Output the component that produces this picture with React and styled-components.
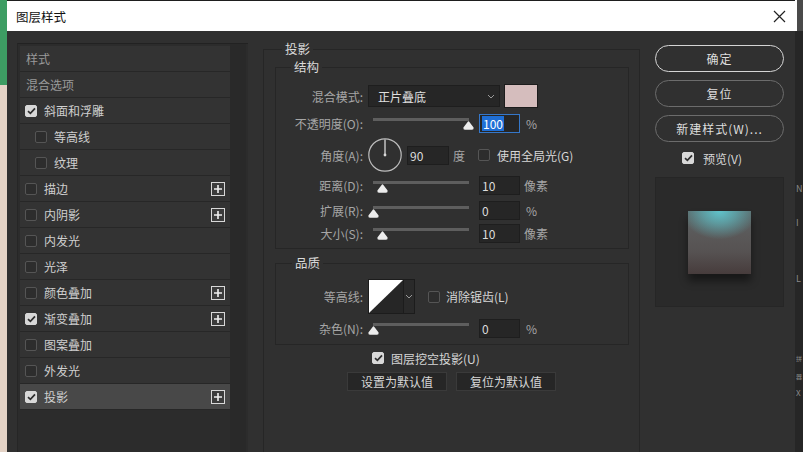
import React from "react";
import styled, { createGlobalStyle } from "styled-components";

const Global = createGlobalStyle`
  html, body { margin: 0; padding: 0; background: #2a2a2a; }
  body { font-family: "Noto Sans CJK SC", "Noto Sans", sans-serif; font-size: 12px; }
  * { box-sizing: border-box; }
`;

const Screen = styled.div`
  display: flex;
  width: 803px;
  height: 452px;
  overflow: hidden;
`;

const Backdrop = styled.div`
  width: 7px;
  flex-shrink: 0;
  display: flex;
  flex-direction: column;
`;

const BackdropPart = styled.div`
  height: ${(p) => (p.$h ? `${p.$h}px` : "auto")};
  flex: ${(p) => (p.$h ? "none" : 1)};
  background: ${(p) => p.$c};
`;

const Dialog = styled.div`
  width: 788px;
  flex-shrink: 0;
  display: flex;
  flex-direction: column;
  background: #303030;
`;

const TitleBar = styled.div`
  height: 31px;
  flex-shrink: 0;
  background: #ffffff;
  border-top: 1px solid #1e1e1e;
  display: flex;
  align-items: center;
  justify-content: space-between;
  padding: 0 9px 0 9px;
  color: #111;
  font-size: 12.5px;
`;

const Body = styled.div`
  flex: 1;
  display: flex;
  align-items: flex-start;
  overflow: hidden;
`;

/* ---------- left list ---------- */
const LeftPanel = styled.div`
  margin: 12px 0 0 10px;
  width: 231px;
  height: 420px;
  display: flex;
  background: #2c2c2c;
  border-top: 1px solid #222;
  border-left: 1px solid #262626;
`;

const List = styled.div`
  width: 212px;
  padding: 2px 0 0 2px;
  display: flex;
  flex-direction: column;
`;

const Scrollbar = styled.div`
  width: 16px;
  background: #292929;
`;

const ListRow = styled.div`
  height: 26px;
  flex-shrink: 0;
  display: flex;
  align-items: center;
  padding-left: ${(p) => p.$pad}px;
  padding-right: 5px;
  background: ${(p) => (p.$active ? "#484848" : "#333333")};
  border-bottom: 1px solid #272727;
  color: ${(p) => (p.$dim ? "#9a9a9a" : "#cfcfcf")};
  font-size: 12px;
`;

const ItemText = styled.span`
  margin-left: ${(p) => p.$ml || 0}px;
`;

const PlusBox = styled.span`
  margin-left: auto;
  width: 14px;
  height: 14px;
  border: 1px solid #d8d8d8;
  background: #3c3c3c;
  display: flex;
  align-items: center;
  justify-content: center;
`;

const Box = styled.span`
  width: 12px;
  height: 12px;
  flex-shrink: 0;
  border-radius: 2px;
  border: 1px solid ${(p) => (p.$on ? "#d8d8d8" : "#555555")};
  background: ${(p) => (p.$on ? "#d8d8d8" : "#2d2d2d")};
  display: flex;
  align-items: center;
  justify-content: center;
`;

const Check = ({ on }) => (
  <Box $on={on}>
    {on && (
      <svg width="9" height="8" viewBox="0 0 9 8">
        <path d="M1 4.2 L3.4 6.4 L8 1.4" fill="none" stroke="#2e2e2e" strokeWidth="1.7" />
      </svg>
    )}
  </Box>
);

const Plus = () => (
  <PlusBox>
    <svg width="10" height="10" viewBox="0 0 10 10">
      <path d="M5 1 V9 M1 5 H9" stroke="#f0f0f0" strokeWidth="1.6" />
    </svg>
  </PlusBox>
);

/* ---------- middle ---------- */
const Middle = styled.div`
  margin: 18px 0 0 15px;
  width: 377px;
  height: 420px;
  flex-shrink: 0;
  position: relative;
  border: 1px solid #262626;
  display: flex;
  flex-direction: column;
`;

const Group = styled.div`
  position: relative;
  margin: ${(p) => p.$mt}px 0 0 11px;
  width: 354px;
  border: 1px solid #262626;
  padding: ${(p) => p.$pt}px 0 ${(p) => p.$pb}px 0;
  display: flex;
  flex-direction: column;
`;

const GroupTitle = styled.span`
  position: absolute;
  top: -10px;
  left: ${(p) => p.$left}px;
  padding: 0 3px;
  background: #303030;
  color: #dadada;
  font-size: 12.5px;
  line-height: 18px;
`;

const Row = styled.div`
  height: ${(p) => p.$h}px;
  flex-shrink: 0;
  display: flex;
  align-items: center;
`;

const Label = styled.span`
  width: 87px;
  flex-shrink: 0;
  text-align: right;
  color: #a6a6a6;
  margin-right: ${(p) => p.$mr}px;
  white-space: nowrap;
`;

const Select = styled.div`
  width: 132px;
  height: 22px;
  background: #262626;
  border: 1px solid #1e1e1e;
  display: flex;
  align-items: center;
  justify-content: space-between;
  padding: 0 4px 0 9px;
  color: #e0e0e0;
`;

const Swatch = styled.div`
  margin-left: 4px;
  width: 34px;
  height: 24px;
  background: #d5bdbd;
  border: 1px solid #1c1c1c;
`;

const SliderWrap = styled.div`
  position: relative;
  width: 96px;
  height: 16px;
  flex-shrink: 0;
`;

const Track = styled.div`
  position: absolute;
  left: 0;
  right: 0;
  top: 3px;
  height: 3px;
  background: #5e5e5e;
`;

const Thumb = styled.svg`
  position: absolute;
  top: 6px;
`;

const Slider = ({ pos }) => (
  <SliderWrap>
    <Track />
    <Thumb width="11" height="9" viewBox="0 0 11 9" style={{ left: pos - 5.5 }}>
      <path d="M5.5 0.3 Q6 0.3 6.4 0.9 L10.6 6.6 Q11 8.8 9 8.8 L2 8.8 Q0 8.8 0.4 6.6 L4.6 0.9 Q5 0.3 5.5 0.3 Z" fill="#ececec" />
    </Thumb>
  </SliderWrap>
);

const Field = styled.div`
  margin-left: ${(p) => p.$ml}px;
  width: ${(p) => p.$w}px;
  height: 19px;
  flex-shrink: 0;
  background: #262626;
  border: 1px solid ${(p) => (p.$focus ? "#3577c9" : "#1e1e1e")};
  color: #dcdcdc;
  display: flex;
  align-items: center;
  padding-left: 2px;
`;

const Selected = styled.span`
  background: #1f6fd6;
  color: #fff;
  padding: 0 1px;
  line-height: 15px;
`;

const Unit = styled.span`
  margin-left: ${(p) => p.$ml}px;
  color: #a6a6a6;
`;

const Text = styled.span`
  margin-left: ${(p) => p.$ml}px;
  color: #d6d6d6;
  white-space: nowrap;
`;

const Dial = styled.svg`
  flex-shrink: 0;
`;

const Contour = styled.div`
  display: flex;
  width: 47px;
  height: 35px;
  border: 1px solid #1c1c1c;
  flex-shrink: 0;
`;

const ContourArrow = styled.div`
  flex: 1;
  background: #2a2a2a;
  border-left: 1px solid #1c1c1c;
  display: flex;
  align-items: center;
  justify-content: center;
`;

const KnockRow = styled.div`
  margin-top: 5px;
  height: 16px;
  display: flex;
  align-items: center;
  padding-left: 108px;
`;

const ButtonRow = styled.div`
  margin-top: 6px;
  display: flex;
  justify-content: center;
  gap: 9px;
`;

const FlatButton = styled.div`
  width: 100px;
  height: 19px;
  background: #262626;
  border: 1px solid #3a3a3a;
  color: #d6d6d6;
  display: flex;
  align-items: center;
  justify-content: center;
`;

/* ---------- right ---------- */
const RightCol = styled.div`
  margin: 14px 0 0 15px;
  width: 129px;
  flex-shrink: 0;
  display: flex;
  flex-direction: column;
`;

const Pill = styled.div`
  height: 27px;
  margin-bottom: 8px;
  border-radius: 14px;
  border: 1.5px solid ${(p) => (p.$primary ? "#d4d4d4" : "#6c6c6c")};
  color: #dedede;
  letter-spacing: 1px;
  display: flex;
  align-items: center;
  justify-content: center;
`;

const PreviewRow = styled.div`
  height: 16px;
  display: flex;
  align-items: center;
  padding-left: 27px;
`;

const PreviewBox = styled.div`
  margin-top: 11px;
  height: 130px;
  background: #2a2a2a;
  border: 1px solid #262626;
  display: flex;
  align-items: center;
  justify-content: center;
`;

const PreviewSquare = styled.div`
  width: 63px;
  height: 63px;
  background:
    radial-gradient(ellipse 60% 45% at 50% 0%, rgba(96, 200, 208, 0.95) 0%, rgba(96, 200, 208, 0.55) 45%, rgba(96, 200, 208, 0) 100%),
    linear-gradient(to bottom, #5b6566 0%, #5a5858 40%, #565252 65%, #473c3c 100%);
  box-shadow: 0 7px 8px rgba(0, 0, 0, 0.45);
`;

/* ---------- right backdrop strip ---------- */
const Strip = styled.div`
  width: 8px;
  flex-shrink: 0;
  display: flex;
  flex-direction: column;
  background: #262626;
  overflow: hidden;
`;

const StripTop = styled.div`
  height: 31px;
  background: #4a4a4a;
  border-left: 2px solid #fff;
`;

const StripGlyph = styled.span`
  margin-top: ${(p) => p.$mt}px;
  margin-left: 1px;
  color: #8a8a8a;
  font-size: ${(p) => p.$fs || 11}px;
  line-height: 12px;
  white-space: nowrap;
`;

const Chevron = () => (
  <svg width="8" height="5" viewBox="0 0 8 5">
    <path d="M1 1 L4 4 L7 1" fill="none" stroke="#9a9a9a" strokeWidth="1" />
  </svg>
);

const listItems = [
  { t: "样式", dim: true },
  { t: "混合选项", dim: true },
  { t: "斜面和浮雕", cb: true, on: true },
  { t: "等高线", cb: true, indent: true },
  { t: "纹理", cb: true, indent: true },
  { t: "描边", cb: true, plus: true },
  { t: "内阴影", cb: true, plus: true },
  { t: "内发光", cb: true },
  { t: "光泽", cb: true },
  { t: "颜色叠加", cb: true, plus: true },
  { t: "渐变叠加", cb: true, on: true, plus: true },
  { t: "图案叠加", cb: true },
  { t: "外发光", cb: true },
  { t: "投影", cb: true, on: true, plus: true, active: true },
];

export default function App() {
  return (
    <Screen>
      <Global />
      <Backdrop>
        <BackdropPart $h={85} $c="#3d9d63" />
        <BackdropPart $c="#e4d3c6" />
      </Backdrop>
      <Dialog>
        <TitleBar>
          <span>图层样式</span>
          <svg width="13" height="13" viewBox="0 0 13 13">
            <path d="M1 1 L12 12 M12 1 L1 12" stroke="#222" strokeWidth="1.2" />
          </svg>
        </TitleBar>
        <Body>
          <LeftPanel>
            <List>
              {listItems.map((it) => (
                <ListRow
                  key={it.t}
                  $pad={it.cb ? (it.indent ? 15 : 5) : 6}
                  $dim={it.dim}
                  $active={it.active}
                >
                  {it.cb && <Check on={it.on} />}
                  <ItemText $ml={it.cb ? 7 : 0}>{it.t}</ItemText>
                  {it.plus && <Plus />}
                </ListRow>
              ))}
            </List>
            <Scrollbar />
          </LeftPanel>

          <Middle>
            <GroupTitle $left={18}>投影</GroupTitle>
            <Group $mt={17} $pt={16} $pb={4}>
              <GroupTitle $left={15}>结构</GroupTitle>
              <Row $h={24}>
                <Label $mr={5}>混合模式:</Label>
                <Select>
                  <span>正片叠底</span>
                  <Chevron />
                </Select>
                <Swatch />
              </Row>
              <Row $h={30}>
                <Label $mr={10}>不透明度(O):</Label>
                <Slider pos={95} />
                <Field $ml={10} $w={41} $focus>
                  <Selected>100</Selected>
                </Field>
                <Unit $ml={6}>%</Unit>
              </Row>
              <Row $h={34}>
                <Label $mr={5}>角度(A):</Label>
                <Dial width="34" height="34" viewBox="0 0 34 34">
                  <circle cx="17" cy="17" r="16.2" fill="none" stroke="#bdbdbd" strokeWidth="1.2" />
                  <path d="M17 17 V1.5" stroke="#d8d8d8" strokeWidth="1.3" />
                  <circle cx="17" cy="17" r="1.4" fill="#d8d8d8" />
                </Dial>
                <Field $ml={5} $w={42}>90</Field>
                <Unit $ml={4}>度</Unit>
                <Text $ml={13}>
                  <Check on={false} />
                </Text>
                <Text $ml={7}>使用全局光(G)</Text>
              </Row>
              <Row $h={27}>
                <Label $mr={10}>距离(D):</Label>
                <Slider pos={9} />
                <Field $ml={10} $w={41}>10</Field>
                <Unit $ml={4}>像素</Unit>
              </Row>
              <Row $h={23}>
                <Label $mr={10}>扩展(R):</Label>
                <Slider pos={0} />
                <Field $ml={10} $w={41}>0</Field>
                <Unit $ml={6}>%</Unit>
              </Row>
              <Row $h={22}>
                <Label $mr={10}>大小(S):</Label>
                <Slider pos={9} />
                <Field $ml={10} $w={41}>10</Field>
                <Unit $ml={4}>像素</Unit>
              </Row>
            </Group>

            <Group $mt={14} $pt={15} $pb={2}>
              <GroupTitle $left={16}>品质</GroupTitle>
              <Row $h={35}>
                <Label $mr={5}>等高线:</Label>
                <Contour>
                  <svg width="34" height="33" viewBox="0 0 34 33" preserveAspectRatio="none">
                    <rect width="34" height="33" fill="#ffffff" />
                    <polygon points="34,0 34,33 0,33" fill="#262626" />
                  </svg>
                  <ContourArrow>
                    <Chevron />
                  </ContourArrow>
                </Contour>
                <Text $ml={13}>
                  <Check on={false} />
                </Text>
                <Text $ml={6}>消除锯齿(L)</Text>
              </Row>
              <Row $h={28}>
                <Label $mr={10}>杂色(N):</Label>
                <Slider pos={0} />
                <Field $ml={10} $w={41}>0</Field>
                <Unit $ml={6}>%</Unit>
              </Row>
            </Group>

            <KnockRow>
              <Check on />
              <Text $ml={7}>图层挖空投影(U)</Text>
            </KnockRow>
            <ButtonRow>
              <FlatButton>设置为默认值</FlatButton>
              <FlatButton>复位为默认值</FlatButton>
            </ButtonRow>
          </Middle>

          <RightCol>
            <Pill $primary>确定</Pill>
            <Pill>复位</Pill>
            <Pill>新建样式(W)...</Pill>
            <PreviewRow>
              <Check on />
              <Text $ml={9}>预览(V)</Text>
            </PreviewRow>
            <PreviewBox>
              <PreviewSquare />
            </PreviewBox>
          </RightCol>
        </Body>
      </Dialog>
      <Strip>
        <StripTop />
        <StripGlyph $mt={152} $fs={9}>N</StripGlyph>
        <StripGlyph $mt={22} $fs={9}>I</StripGlyph>
        <StripGlyph $mt={44} $fs={9}>L</StripGlyph>
        <StripGlyph $mt={68} $fs={6}>拼</StripGlyph>
        <StripGlyph $mt={6} $fs={6}>器</StripGlyph>
        <StripGlyph $mt={4} $fs={8}>X</StripGlyph>
      </Strip>
    </Screen>
  );
}
